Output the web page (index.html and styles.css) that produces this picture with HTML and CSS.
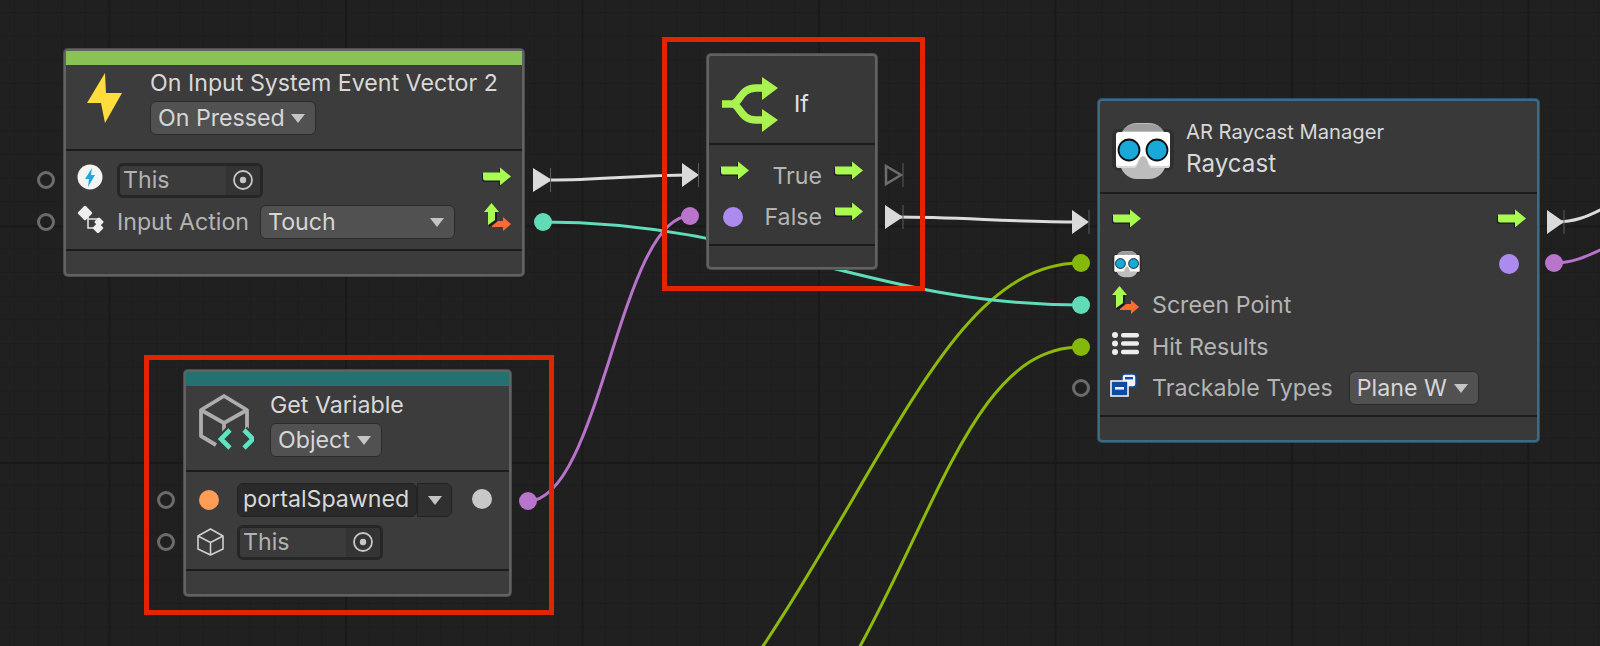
FILE: index.html
```html
<!DOCTYPE html>
<html lang="en">
<head>
<meta charset="utf-8">
<title>Visual Scripting Graph</title>
<link rel="stylesheet" href="styles.css">
</head>
<body>
<svg class="defs" aria-hidden="true">
  <symbol id="flow" viewBox="0 0 30 20">
    <path fill="#1d1330" d="M1 6.500h17V1.500l11 9-11 9v-5H3q-2 0-2-2z" transform="translate(-1 .3)"/>
    <path fill="#a9fb4f" d="M1 5.500h17V.5l11 9-11 9v-5H3q-2 0-2-2z"/>
  </symbol>
  <symbol id="vec" viewBox="0 0 28 28">
    <path fill="none" stroke="#1d1330" stroke-width="1.6" d="M12 9v9l-7 5"/>
    <path fill="#a9fb4f" d="M7.500 0 15 9h-4v8l-7 5V9H0z"/>
    <path fill="#ff6a35" d="M8 23l6-5h5v-4l8 7-8 7v-4H8z"/>
  </symbol>
  <symbol id="goggles" viewBox="0 0 64 56">
    <rect x="1" y="6" width="62" height="42" rx="7" fill="#2f2f2f"/>
    <rect x="9" y="0" width="46" height="56" rx="17" fill="#bdbdbd"/>
    <path fill="#9d9d9d" d="M12 8q4-7 14-7h12q10 0 14 7z"/>
    <path fill="#fff" d="M5 12q0-3 3-3h48q3 0 3 3v30q0 3-3 3H41q-3-1-4-6-2-6-5-6t-5 6q-1 5-4 6H8q-3 0-3-3z"/>
    <path fill="#d9d9d9" d="M5 40v2q0 3 3 3h15q3-1 4-6l-1 1q-1 3-4 3H8q-3 0-3-3zM59 40v2q0 3-3 3H41q-3-1-4-6l1 1q1 3 4 3h14q3 0 3-3z"/>
    <circle cx="18" cy="27" r="10.500" fill="#18a9d8" stroke="#101010" stroke-width="1.800"/>
    <circle cx="46" cy="27" r="10.500" fill="#18a9d8" stroke="#101010" stroke-width="1.800"/>
  </symbol>
  <symbol id="target" viewBox="0 0 22 22">
    <circle cx="11" cy="11" r="9" fill="none" stroke="#c6c6c6" stroke-width="1.800"/>
    <circle cx="11" cy="11" r="3.200" fill="#c6c6c6"/>
  </symbol>
</svg>

<main class="canvas">
  <svg class="wires" viewBox="0 0 1600 646" aria-hidden="true">
    <path class="wire lime" d="M700 735C880 500 940 263 1081 263"/>
    <path class="wire lime" d="M805 735C930 560 960 347 1081 347"/>
    <path class="wire teal" d="M543 222C760 222 870 305 1081 305"/>
    <path class="wire violet" d="M528 501C600 501 620 216 690 216"/>
    <path class="wire violet" d="M1554 263C1572 263 1585 257 1600 250"/>
    <path class="wire white" d="M550 180C600 180 640 175 690 175"/>
    <path class="wire white" d="M895 217C960 217 1010 222 1080 222"/>
    <path class="wire white" d="M1556 222C1575 222 1588 216 1600 210"/>

    <circle class="port-open" cx="46" cy="180" r="7.500"/>
    <circle class="port-open" cx="46" cy="222" r="7.500"/>
    <circle class="port-open" cx="166" cy="500" r="7.500"/>
    <circle class="port-open" cx="166" cy="542" r="7.500"/>
    <circle class="port-open" cx="1081" cy="388" r="7.500"/>

    <circle class="port-teal" cx="543" cy="222" r="9"/>
    <circle class="port-teal" cx="1081" cy="305" r="9"/>
    <circle class="port-violet" cx="690" cy="216" r="9"/>
    <circle class="port-violet" cx="528" cy="501" r="9"/>
    <circle class="port-violet" cx="1554" cy="263" r="9"/>
    <circle class="port-lime" cx="1081" cy="263" r="9"/>
    <circle class="port-lime" cx="1081" cy="347" r="9"/>

    <path class="tri" d="M533 168 552 180 533 192z"/><path class="tick" d="M550.500 168v24"/>
    <path class="tri" d="M682 163 699 175 682 187z"/><path class="tick" d="M698.500 163v24"/>
    <path class="tri-open" d="M886 166 901 175 886 184z"/><path class="tick" d="M903 163v24"/>
    <path class="tri" d="M885 205 903 217 885 229z"/><path class="tick" d="M903 205v24"/>
    <path class="tri" d="M1072 210 1089 222 1072 234z"/><path class="tick" d="M1089 210v24"/>
    <path class="tri" d="M1547 210 1564 222 1547 234z"/><path class="tick" d="M1564 210v24"/>
  </svg>

  <section class="node node-event">
    <div class="bar bar-green"></div>
    <header class="head head-event">
      <svg class="ico-bolt" viewBox="0 0 35 50"><path fill="#ffdd3c" d="M18 0 0 30h14l4 20 17-30H19z"/></svg>
      <div class="head-text">
        <div class="title">On Input System Event Vector 2</div>
        <div class="drop drop-pressed"><span>On Pressed</span><i class="caret"></i></div>
      </div>
    </header>
    <div class="body body-event">
      <div class="row">
        <span class="slot">
          <svg class="ico-badge" viewBox="0 0 26 26"><circle cx="13" cy="13" r="12.500" fill="#f4f4f4"/><path fill="#1fa7e0" d="M15 4 8 15h4l-1 8 7-12h-4z"/></svg>
        </span>
        <div class="field field-event"><span class="field-text">This</span><span class="field-pick"><svg class="ico-target"><use href="#target"/></svg></span></div>
        <svg class="ico-flow up out"><use href="#flow"/></svg>
      </div>
      <div class="row">
        <span class="slot">
          <svg class="ico-action" viewBox="0 0 28 28">
            <path fill="none" stroke="#e2e2e2" stroke-width="1.600" d="M11 10v13h9M11 14h10"/>
            <rect x="2.500" y="2.500" width="11" height="11" rx="1.500" fill="#eee" transform="rotate(45 8 8)"/>
            <rect x="18.500" y="13.500" width="7" height="7" rx="1" fill="#eee" transform="rotate(45 22 17)"/>
            <rect x="17" y="19" width="8" height="8" rx="1" fill="#eee" transform="rotate(45 21 23)"/>
          </svg>
        </span>
        <span class="label">Input Action</span>
        <div class="drop drop-touch"><span>Touch</span><i class="caret"></i></div>
        <svg class="ico-vec up out"><use href="#vec"/></svg>
      </div>
    </div>
    <div class="foot"></div>
  </section>

  <section class="node node-if">
    <header class="head head-if">
      <svg class="ico-if" viewBox="0 0 56 55">
        <path fill="none" stroke="#a9f24f" stroke-width="7.500" d="M0 27h10c8 0 8-16 24-16h8M10 27c8 0 8 16 24 16h8"/>
        <path fill="#a9f24f" d="M40 0l16 11-16 12zM40 32l16 11-16 12z"/>
      </svg>
      <div class="title-if">If</div>
    </header>
    <div class="body body-if">
      <div class="row">
        <svg class="ico-flow up"><use href="#flow"/></svg>
        <span class="label label-end">True</span>
        <svg class="ico-flow up"><use href="#flow"/></svg>
      </div>
      <div class="row">
        <span class="dot-wrap"><i class="dot dot-violet"></i></span>
        <span class="label label-end">False</span>
        <svg class="ico-flow up"><use href="#flow"/></svg>
      </div>
    </div>
    <div class="foot foot-if"></div>
  </section>

  <section class="node node-ray">
    <header class="head head-ray">
      <svg class="ico-goggles-lg"><use href="#goggles"/></svg>
      <div class="head-text-ray">
        <div class="subtitle">AR Raycast Manager</div>
        <div class="title title-ray">Raycast</div>
      </div>
    </header>
    <div class="body body-ray">
      <div class="row">
        <span class="slot"><svg class="ico-flow up"><use href="#flow"/></svg></span>
        <svg class="ico-flow up out"><use href="#flow"/></svg>
      </div>
      <div class="row">
        <span class="slot"><svg class="ico-goggles-sm"><use href="#goggles"/></svg></span>
        <i class="dot dot-violet out out-dot"></i>
      </div>
      <div class="row">
        <span class="slot"><svg class="ico-vec up"><use href="#vec"/></svg></span>
        <span class="label">Screen Point</span>
      </div>
      <div class="row">
        <span class="slot">
          <svg class="ico-list up" viewBox="0 0 27 23">
            <g fill="#eee"><circle cx="3" cy="3" r="3"/><circle cx="3" cy="11.500" r="3"/><circle cx="3" cy="20" r="3"/>
            <rect x="9" y="1" width="18" height="4.400" rx="2"/><rect x="9" y="9.300" width="18" height="4.400" rx="2"/><rect x="9" y="17.800" width="18" height="4.400" rx="2"/></g>
          </svg>
        </span>
        <span class="label">Hit Results</span>
      </div>
      <div class="row">
        <span class="slot">
          <svg class="ico-enum up" viewBox="0 0 27 24">
            <rect x="12" y="1" width="14" height="13" rx="3" fill="#f2f2f2" stroke="#0f4aa3" stroke-width="1.500"/>
            <rect x="15" y="4" width="8" height="2.400" fill="#0f4aa3"/>
            <rect x="1" y="8" width="17" height="15" fill="#0f4aa3" stroke="#f2f2f2" stroke-width="1.600"/>
            <rect x="5" y="14" width="9" height="2.600" fill="#f2f2f2"/>
          </svg>
        </span>
        <span class="label">Trackable Types</span>
        <div class="drop drop-plane"><span>Plane W</span><i class="caret"></i></div>
      </div>
    </div>
    <div class="foot"></div>
  </section>

  <section class="node node-var">
    <div class="bar bar-teal"></div>
    <header class="head head-var">
      <svg class="ico-var" viewBox="0 0 58 60">
        <path fill="none" stroke="#adadad" stroke-width="3.800" stroke-linejoin="round" d="M20 54 5 45V19L28 5l23 14v19M5 19l23 13 23-13M28 32v10"/>
        <path fill="none" stroke="#3c3c3c" stroke-width="9" d="M34 39l-9 9 9 9M48 39l9 9-9 9"/>
        <path fill="none" stroke="#5fe3c0" stroke-width="4.600" d="M34 39l-9 9 9 9M48 39l9 9-9 9"/>
      </svg>
      <div class="head-text">
        <div class="title">Get Variable</div>
        <div class="drop drop-object"><span>Object</span><i class="caret"></i></div>
      </div>
    </header>
    <div class="body body-var">
      <div class="row">
        <span class="slot slot-var"><i class="dot dot-orange"></i></span>
        <div class="name-field">portalSpawned</div>
        <div class="name-drop"><i class="caret"></i></div>
        <i class="dot dot-grey out-grey"></i>
      </div>
      <div class="row">
        <span class="slot slot-var">
          <svg class="ico-cube" viewBox="0 0 27 28"><path fill="none" stroke="#cfcfcf" stroke-width="1.600" stroke-linejoin="round" d="M13.500 1 26 8v13l-12.500 6L1 21V8zM1 8l12.500 6.500L26 8M13.500 14.500V27"/></svg>
        </span>
        <div class="field field-var"><span class="field-text">This</span><span class="field-pick"><svg class="ico-target"><use href="#target"/></svg></span></div>
      </div>
    </div>
    <div class="foot"></div>
  </section>

  <div class="mark mark-if"></div>
  <div class="mark mark-var"></div>
</main>
</body>
</html>
```

FILE: styles.css
```css
* { box-sizing: border-box; }
html, body { margin: 0; padding: 0; background: #202020; }
body { font-family: Inter, "Liberation Sans", sans-serif; }
.defs { position: absolute; width: 0; height: 0; }

.canvas {
  position: relative;
  width: 1600px;
  height: 646px;
  overflow: hidden;
  background-color: #202020;
  background-image:
    linear-gradient(90deg, #191919 1.5px, transparent 1.5px),
    linear-gradient(#191919 1.5px, transparent 1.5px),
    linear-gradient(90deg, #1d1d1d 1px, transparent 1px),
    linear-gradient(#1d1d1d 1px, transparent 1px);
  background-size: 236.5px 236.5px, 236.5px 236.5px, 23.65px 23.65px, 23.65px 23.65px;
  background-position: 108.5px 0, 0 225.5px, 14px 0, 0 12px;
}

.wires { position: absolute; inset: 0; width: 1600px; height: 646px; }
.wire { fill: none; stroke-width: 3; stroke-linecap: round; }
.lime { stroke: #8cb90a; }
.teal { stroke: #5fdcb9; }
.violet { stroke: #b873cb; }
.white { stroke: #dcdcdc; }
.port-open { fill: none; stroke: #6b6b6b; stroke-width: 3; }
.port-teal { fill: #62dcb8; }
.port-violet { fill: #b974cb; }
.port-lime { fill: #84b80a; }
.tri { fill: #dadada; }
.tri-open { fill: none; stroke: #6d6d6d; stroke-width: 2.5; }
.tick { stroke: #5a5a5a; stroke-width: 1; fill: none; }

.node {
  position: absolute;
  display: flex;
  flex-direction: column;
  background: #3c3c3c;
  border: 2px solid #626262;
  border-radius: 4px;
  box-shadow: 0 0 0 1px #4e4e4e;
}
.node-event { left: 64px; top: 49px; width: 460px; height: 227px; }
.node-if { left: 707px; top: 54px; width: 170px; height: 215px; background: #383838; }
.node-ray { left: 1098px; top: 99px; width: 441px; height: 343px; border-color: #3a6c88; background: #393939; box-shadow: 0 0 0 1px #2c5068; }
.node-var { left: 184px; top: 370px; width: 327px; height: 226px; }

.bar { height: 14px; flex: none; }
.bar-green { background: #88c355; }
.bar-teal { background: #257170; }

.head { flex: none; display: flex; border-bottom: 2px solid #1c1c1c; }
.head-event { height: 86px; padding: 8px 0 0 21px; gap: 28px; }
.head-if { height: 89px; padding: 21px 0 0 13px; gap: 16px; }
.head-ray { height: 93px; padding: 22px 0 0 11px; gap: 11px; }
.head-var { height: 86px; padding: 5px 0 0 10px; gap: 16px; }

.head-text { display: flex; flex-direction: column; align-items: flex-start; gap: 5px; margin-top: -3px; }
.head-var .head-text { margin-top: 1px; gap: 5px; }
.head-text-ray { display: flex; flex-direction: column; gap: 8px; margin-top: -2px; }

.title { font-size: 23.2px; line-height: 26px; color: #d8d8d8; white-space: nowrap; }
.title-ray { font-size: 24.2px; }
.subtitle { font-size: 20.2px; line-height: 22px; color: #d8d8d8; white-space: nowrap; }
.title-if { font-size: 23.2px; line-height: 26px; color: #e2e2e2; margin-top: 14px; }

.body { flex: 1; display: flex; flex-direction: column; }
.body-event { padding: 11px 10px 0 11px; gap: 6px; }
.body-if { padding: 13px 11px 0 11px; gap: 5px; }
.body-ray { padding: 10px 10px 0 12px; gap: 5.5px; }
.body-var { padding: 10px 14px 0 10px; gap: 6px; }

.foot { flex: none; height: 25px; border-top: 2px solid #1c1c1c; }
.foot-if { height: 23px; }

.row { display: flex; align-items: center; height: 36px; flex: none; }
.slot { flex: none; width: 40px; display: flex; align-items: center; }
.slot-var { width: 41px; }
.out { margin-left: auto; }
.up { margin-bottom: 7px; }
.body-if .up { margin-bottom: 10px; }
.ico-vec.up { margin-bottom: 10px; }

.label { font-size: 23.2px; color: #b4b4b4; white-space: nowrap; }
.label-end { flex: 1; text-align: right; padding-right: 12px; }

.drop {
  display: flex;
  align-items: center;
  justify-content: space-between;
  height: 34px;
  padding: 0 10px 0 7px;
  border: 1.5px solid #2b2b2b;
  border-radius: 6px;
  background: #515151;
  color: #d6d6d6;
  font-size: 23.2px;
  white-space: nowrap;
}
.drop-pressed { width: 166px; }
.drop-touch { width: 195px; margin-left: 11px; }
.drop-object { width: 112px; }
.drop-plane { width: 130px; margin-left: 16px; }

.caret {
  flex: none;
  width: 0;
  height: 0;
  border-left: 7px solid transparent;
  border-right: 7px solid transparent;
  border-top: 9px solid #c4c4c4;
}

.field {
  display: flex;
  height: 35px;
  border: 3px solid #262626;
  border-radius: 6px;
  background: #3b3b3b;
  color: #b2b2b2;
  font-size: 23.2px;
  overflow: hidden;
}
.field-event { width: 146px; }
.field-var { width: 146px; }
.field-text { flex: 1; padding-left: 3px; line-height: 29px; }
.field-pick { flex: none; width: 34px; background: #343434; display: flex; align-items: center; justify-content: center; }
.ico-target { width: 22px; height: 22px; }

.name-field {
  width: 180px;
  height: 34px;
  padding-left: 5px;
  border: 1.5px solid #232323;
  border-radius: 6px;
  background: #2a2a2a;
  color: #d8d8d8;
  font-size: 23.2px;
  line-height: 31px;
  white-space: nowrap;
}
.name-drop {
  width: 35px;
  height: 34px;
  display: flex;
  align-items: center;
  justify-content: center;
  border: 1.5px solid #232323;
  border-radius: 0 6px 6px 0;
  background: #303030;
}

.dot { display: block; flex: none; width: 20px; height: 20px; border-radius: 50%; }
.dot-wrap { flex: none; width: 28px; padding-left: 3px; }
.dot-violet { background: #ad8bee; }
.dot-orange { background: #ff9d57; margin-left: 3px; }
.dot-grey { background: #c8c8c8; }
.out-dot { margin-right: 8px; }
.out-grey { margin-left: 20px; margin-bottom: 2px; }

.ico-bolt { width: 35px; height: 50px; flex: none; }
.ico-if { width: 56px; height: 55px; flex: none; }
.ico-flow { width: 30px; height: 20px; flex: none; }
.ico-vec { width: 28px; height: 28px; flex: none; }
.ico-badge { width: 26px; height: 26px; margin-bottom: 6px; }
.ico-action { width: 28px; height: 28px; margin-bottom: 6px; }
.ico-goggles-lg { width: 64px; height: 56px; flex: none; }
.ico-goggles-sm { width: 30px; height: 28px; margin-bottom: 0; }
.ico-list { width: 27px; height: 23px; }
.ico-enum { width: 27px; height: 24px; margin-left: -2px; }
.ico-var { width: 58px; height: 60px; flex: none; }
.ico-cube { width: 27px; height: 28px; margin-left: 1px; }

.mark { position: absolute; border: 5px solid #e22400; }
.mark-if { left: 662px; top: 37px; width: 263px; height: 254px; }
.mark-var { left: 144px; top: 355px; width: 410px; height: 260px; }
```
